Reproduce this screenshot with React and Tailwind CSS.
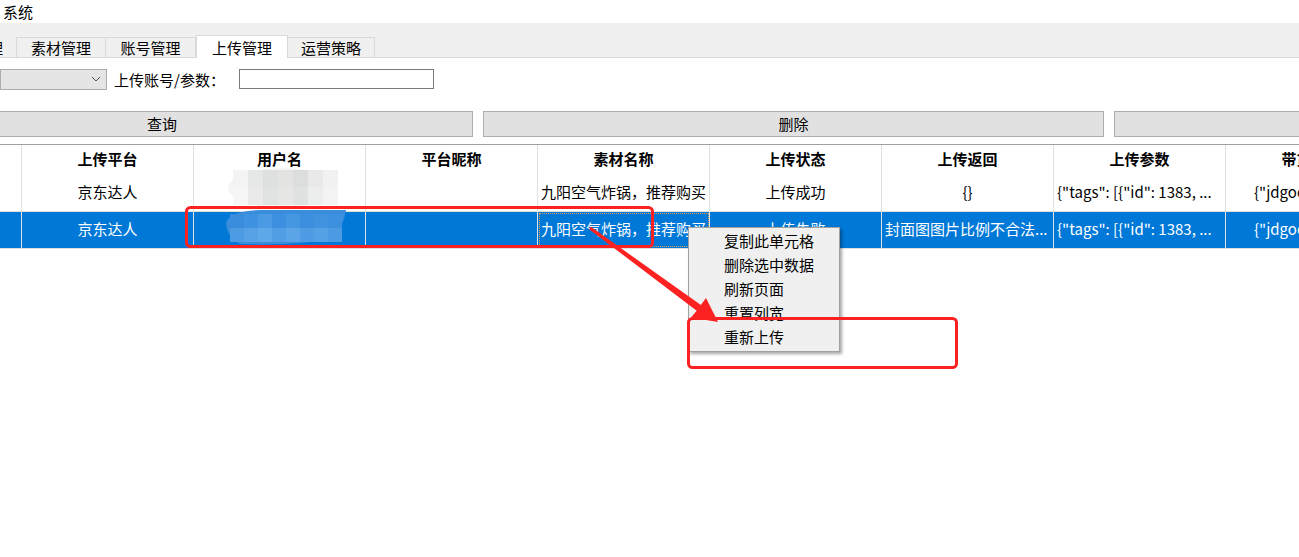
import React from 'react';

const cols = ['', '上传平台', '用户名', '平台昵称', '素材名称', '上传状态', '上传返回', '上传参数', '带货商品'];

const rows = [
  {
    selected: false,
    cells: [
      { t: '' },
      { t: '京东达人', c: true },
      { t: '' },
      { t: '' },
      { t: '九阳空气炸锅，推荐购买' },
      { t: '上传成功', c: true },
      { t: '{}', c: true },
      { t: '{"tags": [{"id": 1383, ...' },
      { t: '{"jdgoodsId": 100...', pl: true },
    ],
  },
  {
    selected: true,
    cells: [
      { t: '' },
      { t: '京东达人', c: true },
      { t: '' },
      { t: '' },
      { t: '九阳空气炸锅，推荐购买', focus: true },
      { t: '上传失败', c: true },
      { t: '封面图图片比例不合法...' },
      { t: '{"tags": [{"id": 1383, ...' },
      { t: '{"jdgoodsId": 100...', pl: true },
    ],
  },
];

const menuItems = ['复制此单元格', '删除选中数据', '刷新页面', '重置列宽', '重新上传'];

const grey1 = ['#f3f3f3', '#e6e7e7', '#dedfdf', '#e3e3e2', '#dcdddd', '#e9e9e9', '#f1f1f1'];
const grey2 = ['#f6f6f6', '#eaeaea', '#e1e2e2', '#e6e6e5', '#e0e1e1', '#eceded', '#f4f4f4'];
const blue1 = ['#3a8ddd', '#3f92e0', '#4a9ae4', '#3c90df', '#4597e2', '#3b8fde', '#4193e0', '#3d90de'];
const blue2 = ['#4d9be3', '#57a2e6', '#5ea7e8', '#519ee5', '#5aa4e7', '#4f9ce4', '#55a1e6', '#4c9ae2'];

function Tab({ label, active, w }) {
  if (active) {
    return (
      <div className={`h-[23px] ${w} shrink-0 bg-white border border-b-0 border-[#d9d9d9] flex items-center justify-center -mb-px relative z-10`}>
        {label}
      </div>
    );
  }
  return (
    <div className={`h-[20px] ${w} shrink-0 bg-[#f0f0f0] border border-[#d9d9d9] border-b-0 -ml-px flex items-center justify-center`}>
      {label}
    </div>
  );
}

export default function App() {
  return (
    <div className="relative w-[1299px] h-[557px] overflow-hidden bg-white text-black text-[15px] leading-none font-['Noto_Sans_CJK_SC','Noto_Sans',sans-serif]">
      <div className="h-[23px] pl-[3px] flex items-center">系统</div>

      {/* tabs */}
      <div className="h-[35px] bg-[#f0f0f0] border-b border-[#d9d9d9] flex items-end">
        <div className="h-[20px] w-[17px] shrink-0 border-r border-[#d9d9d9] overflow-hidden flex items-center">
          <span className="-ml-[12px]">理</span>
        </div>
        <Tab label="素材管理" w="w-[90px]" />
        <Tab label="账号管理" w="w-[91px]" />
        <Tab label="上传管理" w="w-[92px]" active />
        <Tab label="运营策略" w="w-[88px]" />
      </div>

      {/* filters */}
      <div className="mt-[11px] h-[20px] flex items-center">
        <div className="w-[107px] h-[21px] shrink-0 bg-[#e5e5e5] border border-[#adadad] flex items-center justify-end pr-[4px]">
          <svg width="12" height="8" viewBox="0 0 12 8">
            <path d="M2 2 L6 6 L10 2" fill="none" stroke="#555" strokeWidth="1" />
          </svg>
        </div>
        <span className="ml-[7px]">上传账号/参数：</span>
        <div className="ml-[14px] w-[195px] h-[20px] border border-[#7a7a7a] bg-white" />
      </div>

      {/* buttons */}
      <div className="mt-[22px] h-[26px] flex gap-[10px]">
        <div className="-ml-[149px] w-[622px] shrink-0 bg-[#e1e1e1] border border-[#adadad] flex items-center justify-center pb-px">查询</div>
        <div className="w-[621px] shrink-0 bg-[#e1e1e1] border border-[#adadad] flex items-center justify-center pb-px">删除</div>
        <div className="w-[300px] shrink-0 bg-[#e1e1e1] border border-[#adadad]" />
      </div>

      {/* table */}
      <div className="mt-[7px] border-t border-[#a0a0a0] w-[1400px]">
        <div className="grid grid-cols-[22px_repeat(8,172px)] h-[30px]">
          {cols.map((c, i) => (
            <div key={i} className="border-r border-[#e0e0e0] flex items-center justify-center pb-[3px] font-bold whitespace-nowrap overflow-hidden">
              {c}
            </div>
          ))}
        </div>
        {rows.map((r, ri) => (
          <div
            key={ri}
            className={`grid grid-cols-[22px_repeat(8,172px)] h-[37px] border-b ${r.selected ? 'bg-[#0078d7] text-white border-[#e0e0e0]' : 'border-[#e0e0e0]'}`}
          >
            {r.cells.map((cell, ci) => (
              <div
                key={ci}
                className={`border-r border-[#e0e0e0] flex items-center pb-[3px] whitespace-nowrap overflow-hidden ${cell.c ? 'justify-center' : cell.pl ? 'pl-[28px]' : 'pl-[3px]'} ${cell.focus ? 'outline outline-1 outline-dotted outline-[#e8a040] -outline-offset-2' : ''}`}
              >
                {cell.t}
              </div>
            ))}
          </div>
        ))}
      </div>

      {/* context menu */}
      <div className="absolute left-[688px] top-[227px] w-[152px] bg-[#f0f0f0] border border-[#a0a0a0] shadow-[2px_2px_3px_rgba(0,0,0,0.35)] pt-0 pb-[3px]">
        {menuItems.map((m) => (
          <div key={m} className="h-[24px] pl-[35px] flex items-center">
            {m}
          </div>
        ))}
      </div>

      {/* mosaic + red annotations */}
      <svg className="absolute left-0 top-0 pointer-events-none" width="1299" height="557" viewBox="0 0 1299 557">
        <ellipse cx="282" cy="188" rx="54" ry="20" fill="#f5f5f5" />
        {grey1.map((g, i) => (
          <rect key={'a' + i} x={233 + i * 15} y={170} width="15" height="17" fill={g} />
        ))}
        {grey2.map((g, i) => (
          <rect key={'b' + i} x={233 + i * 15} y={187} width="15" height="18" fill={g} />
        ))}
        <path d="M226 222 Q232 210 262 210 L346 210 Q344 226 332 238 Q300 246 240 244 Q226 236 226 222 Z" fill="#3a8ddd" />
        {blue1.map((b, i) => (
          <rect key={'c' + i} x={230 + i * 14} y={214} width="14" height="14" fill={b} />
        ))}
        {blue2.map((b, i) => (
          <rect key={'d' + i} x={230 + i * 14} y={228} width="14" height="14" fill={b} />
        ))}
        <rect x="186.5" y="207.5" width="466" height="39" rx="4" fill="none" stroke="#fc2222" strokeWidth="3" />
        <rect x="688.5" y="318.5" width="268" height="49" rx="4" fill="none" stroke="#fc2222" strokeWidth="3" />
        <polygon
          points="590.9,226.8 700.9,305.1 706,298 718,322 691,317.5 696.7,310.7 589.1,229.2"
          fill="#fc2222"
        />
      </svg>
    </div>
  );
}
